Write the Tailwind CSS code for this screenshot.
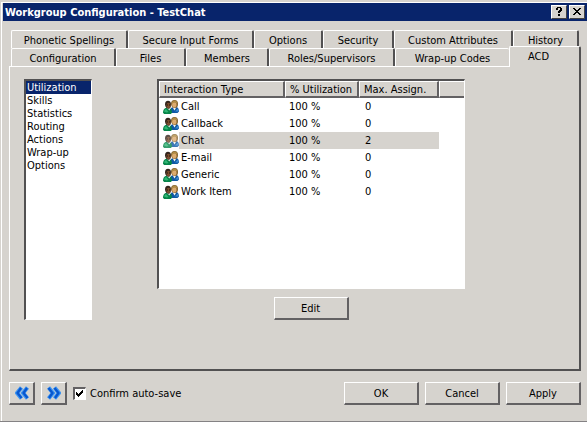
<!DOCTYPE html>
<html lang="en">
<head>
<meta charset="utf-8">
<meta name="viewport" content="width=device-width, initial-scale=1">
<title>Workgroup Configuration - TestChat</title>
<script src="https://cdn.jsdelivr.net/npm/@tailwindcss/browser@4"></script>
</head>
<body class="bg-[#d6d3ce] font-['DejaVu_Sans_Condensed','DejaVu_Sans',sans-serif] text-[11px] leading-[13px] text-black">
<svg class="hidden" aria-hidden="true">
  <symbol id="people" viewBox="0 0 16 14">
    <path d="M8 8 10 7H14Q16 8 16 11.500L14.500 13H8Z" fill="#0f58a3"/>
    <path d="M9.500 7h4l-2 3.500z" fill="#f4f4ee"/>
    <path d="M12 11.500 15 8.500 15.500 11.500z" fill="#3a8ad2"/>
    <path d="M8 4Q8 0 11.500 0 15 0 15 4 15 8 11.800 8 8.500 8 8 4Z" fill="#80602c"/>
    <ellipse cx="11.300" cy="4.700" rx="2.200" ry="2.800" fill="#dcab6e"/>
    <path d="M8.500 3Q9.500 .5 11.500 .5 14 .5 14.300 3.500L12.500 2.500 9 3.200Z" fill="#b08c46"/>
    <path d="M0 12.500Q0 9 2.500 8H7Q9 9 9 12.500L8 14H1Z" fill="#07854a"/>
    <path d="M1 11.500Q1.500 9.500 3 9L5.500 12 3.500 12.500Z" fill="#2fb673"/>
    <path d="M4 8h3.500L6.500 10.500Z" fill="#e8eee8"/>
    <path d="M2 4.500Q2 .8 5 .8 8 .8 8 4.500 8 8.700 5.300 8.700 2.500 8.500 2 4.500Z" fill="#33241c"/>
    <ellipse cx="5.500" cy="5.500" rx="2" ry="2.800" fill="#7d4c2c"/>
    <path d="M4 4.500h1v1H4zM6 4.500h1v1H6z" fill="#20120c"/>
  </symbol>
  <symbol id="chevrons" viewBox="0 0 14 14">
    <path d="M1.500 1.500 6 7 1.500 12.500M7.500 1.500 12 7 7.500 12.500" fill="none" stroke="#3c94f2" stroke-width="4"/>
    <path d="M1.500 2 5.500 7 2 12M7.500 2 11.500 7 8 12" fill="none" stroke="#0857cf" stroke-width="2.200"/>
  </symbol>
</svg>

<main class="flex min-h-screen flex-col border-b border-[#848284] pt-0.5 pl-px">
  <div class="flex flex-1 flex-col border-t border-l border-white pl-px">
    <header class="flex h-[18px] items-center bg-[#08246b] pr-0.5 pl-0.5 text-white">
      <h1 class="flex-1 font-bold">Workgroup Configuration - TestChat</h1>
      <div class="flex gap-0.5">
        <button type="button" aria-label="Help" class="flex h-3.5 w-4 items-center justify-center border border-t-white border-r-[#424142] border-b-[#424142] border-l-white bg-[#d6d3ce]">
          <svg class="h-[10px] w-[10px]" viewBox="0 0 10 10" shape-rendering="crispEdges"><path d="M3 0h4v1h1v3H7v1H6v1H4V4h1V3h1V1H4v2H2V1h1zM4 7h2v2H4z" fill="#000"/></svg>
        </button>
        <button type="button" aria-label="Close" class="flex h-3.5 w-4 items-center justify-center border border-t-white border-r-[#424142] border-b-[#424142] border-l-white bg-[#d6d3ce]">
          <svg class="h-[10px] w-[10px]" viewBox="0 0 10 10" shape-rendering="crispEdges"><path d="M1 1h2v1h1v1h2V2h1V1h2v1H8v1H7v1H6v1h1v1h1v1h1v1H7V7H6V6H4v1H3v1H1V7h1V6h1V5h1V4H3V3H2V2H1z" fill="#000"/></svg>
        </button>
      </div>
    </header>

    <div class="flex flex-1 flex-col pt-[9px] pr-1.5 pb-4 pl-1.5">
      <div role="tablist" aria-label="Workgroup settings">
        <div class="mr-0.5 ml-0.5 grid grid-cols-[117fr_126fr_69fr_71fr_119fr_66fr] grid-rows-[18px]">
          <button role="tab" type="button" class="rounded-t-[2px] border-t border-r-2 border-l border-t-white border-r-[#525152] border-l-white pt-0.5">Phonetic Spellings</button>
          <button role="tab" type="button" class="rounded-t-[2px] border-t border-r-2 border-l border-t-white border-r-[#525152] border-l-white pt-0.5">Secure Input Forms</button>
          <button role="tab" type="button" class="rounded-t-[2px] border-t border-r-2 border-l border-t-white border-r-[#525152] border-l-white pt-0.5">Options</button>
          <button role="tab" type="button" class="rounded-t-[2px] border-t border-r-2 border-l border-t-white border-r-[#525152] border-l-white pt-0.5">Security</button>
          <button role="tab" type="button" class="rounded-t-[2px] border-t border-r-2 border-l border-t-white border-r-[#525152] border-l-white pt-0.5">Custom Attributes</button>
          <button role="tab" type="button" class="rounded-t-[2px] border-t border-r-2 border-l border-t-white border-r-[#525152] border-l-white pt-0.5">History</button>
        </div>
        <div class="ml-0.5 grid grid-cols-[105fr_70fr_83fr_126fr_114fr_72fr] grid-rows-[18px] items-end">
          <button role="tab" type="button" class="h-[18px] rounded-t-[2px] border-t border-r-2 border-l border-t-white border-r-[#525152] border-l-white pt-0.5">Configuration</button>
          <button role="tab" type="button" class="h-[18px] rounded-t-[2px] border-t border-r-2 border-l border-t-white border-r-[#525152] border-l-white pt-0.5">Files</button>
          <button role="tab" type="button" class="h-[18px] rounded-t-[2px] border-t border-r-2 border-l border-t-white border-r-[#525152] border-l-white pt-0.5">Members</button>
          <button role="tab" type="button" class="h-[18px] rounded-t-[2px] border-t border-r-2 border-l border-t-white border-r-[#525152] border-l-white pt-0.5">Roles/Supervisors</button>
          <button role="tab" type="button" class="h-[18px] rounded-t-[2px] border-t border-l border-white pt-0.5">Wrap-up Codes</button>
          <button role="tab" type="button" aria-selected="true" class="relative z-10 -mb-px h-[21px] rounded-t-[2px] border-t border-r-2 border-l border-t-white border-r-[#525152] border-l-white bg-[#d6d3ce] pr-3 pb-0.5">ACD</button>
        </div>
      </div>

      <section role="tabpanel" aria-label="ACD" class="flex flex-1 items-start border-t border-r-2 border-b-2 border-l border-t-white border-r-[#525152] border-b-[#525152] border-l-white pt-3 pl-3.5">
        <select size="7" aria-label="ACD pages" class="h-[241px] w-[68px] shrink-0 overflow-hidden rounded-none border-t-2 border-r border-b border-l-2 border-t-[#525152] border-r-white border-b-white border-l-[#525152] bg-white p-0 outline-none">
          <option selected class="min-h-0 p-0 pl-px leading-[13px] checked:bg-[#08246b] checked:bg-linear-to-r checked:from-[#08246b] checked:to-[#08246b] checked:text-white">Utilization</option>
          <option class="min-h-0 p-0 pl-px leading-[13px]">Skills</option>
          <option class="min-h-0 p-0 pl-px leading-[13px]">Statistics</option>
          <option class="min-h-0 p-0 pl-px leading-[13px]">Routing</option>
          <option class="min-h-0 p-0 pl-px leading-[13px]">Actions</option>
          <option class="min-h-0 p-0 pl-px leading-[13px]">Wrap-up</option>
          <option class="min-h-0 p-0 pl-px leading-[13px]">Options</option>
        </select>

        <div class="ml-[65px] flex w-[308px] flex-col items-center gap-2">
          <div class="h-[210px] w-full border-t-2 border-r border-b border-l-2 border-t-[#525152] border-r-white border-b-white border-l-[#525152] bg-white">
            <table class="w-full table-fixed border-separate border-spacing-0 text-left">
              <colgroup><col class="w-[126px]"><col class="w-[74px]"><col class="w-[80px]"><col></colgroup>
              <thead>
                <tr class="h-[17px] bg-[#d6d3ce]">
                  <th class="border-t border-r-2 border-b-2 border-l border-t-white border-r-[#636163] border-b-[#636163] border-l-white p-0 pl-1 font-normal">Interaction Type</th>
                  <th class="border-t border-r-2 border-b-2 border-l border-t-white border-r-[#636163] border-b-[#636163] border-l-white p-0 pl-1 font-normal">% Utilization</th>
                  <th class="border-t border-r-2 border-b-2 border-l border-t-white border-r-[#636163] border-b-[#636163] border-l-white p-0 pl-1 font-normal">Max. Assign.</th>
                  <td class="border-t border-b-2 border-l border-t-white border-b-[#636163] border-l-white p-0"></td>
                </tr>
              </thead>
              <tbody>
                <tr class="h-[17px]"><td class="p-0 pl-1"><div class="flex h-[17px] items-center"><svg class="h-3.5 w-4"><use href="#people"/></svg><span class="flex-1 pl-0.5">Call</span></div></td><td class="p-0 pl-1">100 %</td><td class="p-0 pl-1.5">0</td><td class="p-0"></td></tr>
                <tr class="h-[17px]"><td class="p-0 pl-1"><div class="flex h-[17px] items-center"><svg class="h-3.5 w-4"><use href="#people"/></svg><span class="flex-1 pl-0.5">Callback</span></div></td><td class="p-0 pl-1">100 %</td><td class="p-0 pl-1.5">0</td><td class="p-0"></td></tr>
                <tr class="h-[17px]" aria-selected="true"><td class="p-0 pl-1"><div class="flex h-[17px] items-center"><svg class="h-3.5 w-4 opacity-80"><use href="#people"/></svg><span class="flex h-[17px] flex-1 items-center bg-[#d6d3ce] pl-0.5">Chat</span></div></td><td class="bg-[#d6d3ce] p-0 pl-1">100 %</td><td class="bg-[#d6d3ce] p-0 pl-1.5">2</td><td class="p-0"></td></tr>
                <tr class="h-[17px]"><td class="p-0 pl-1"><div class="flex h-[17px] items-center"><svg class="h-3.5 w-4"><use href="#people"/></svg><span class="flex-1 pl-0.5">E-mail</span></div></td><td class="p-0 pl-1">100 %</td><td class="p-0 pl-1.5">0</td><td class="p-0"></td></tr>
                <tr class="h-[17px]"><td class="p-0 pl-1"><div class="flex h-[17px] items-center"><svg class="h-3.5 w-4"><use href="#people"/></svg><span class="flex-1 pl-0.5">Generic</span></div></td><td class="p-0 pl-1">100 %</td><td class="p-0 pl-1.5">0</td><td class="p-0"></td></tr>
                <tr class="h-[17px]"><td class="p-0 pl-1"><div class="flex h-[17px] items-center"><svg class="h-3.5 w-4"><use href="#people"/></svg><span class="flex-1 pl-0.5">Work Item</span></div></td><td class="p-0 pl-1">100 %</td><td class="p-0 pl-1.5">0</td><td class="p-0"></td></tr>
              </tbody>
            </table>
          </div>
          <button type="button" class="h-[23px] w-[75px] border-t border-r-2 border-b-2 border-l border-t-white border-r-[#636163] border-b-[#636163] border-l-white">Edit</button>
        </div>
      </section>

      <footer class="flex items-center gap-1.5 pt-[11px]">
        <button type="button" aria-label="Previous" class="flex h-[23px] w-[26px] items-center justify-center border-t border-r-2 border-b-2 border-l border-t-white border-r-[#636163] border-b-[#636163] border-l-white"><svg class="h-3.5 w-3.5 rotate-180"><use href="#chevrons"/></svg></button>
        <button type="button" aria-label="Next" class="flex h-[23px] w-[26px] items-center justify-center border-t border-r-2 border-b-2 border-l border-t-white border-r-[#636163] border-b-[#636163] border-l-white"><svg class="h-3.5 w-3.5"><use href="#chevrons"/></svg></button>
        <label class="flex flex-1 items-center gap-1">
          <span class="grid">
            <input type="checkbox" checked class="peer col-start-1 row-start-1 h-[13px] w-[13px] appearance-none border-t-2 border-r border-b border-l-2 border-t-[#636163] border-r-white border-b-white border-l-[#636163] bg-white">
            <svg class="pointer-events-none col-start-1 row-start-1 hidden h-[13px] w-[13px] peer-checked:block" viewBox="0 0 13 13" shape-rendering="crispEdges"><path d="M3 5h1v1h1v1h1V6h1V5h1V4h1V3h1v3H9v1H8v1H7v1H6v1H5V9H4V8H3z" fill="#000"/></svg>
          </span>
          Confirm auto-save
        </label>
        <button type="button" class="h-[23px] w-[75px] border-t border-r-2 border-b-2 border-l border-t-white border-r-[#636163] border-b-[#636163] border-l-white">OK</button>
        <button type="button" class="h-[23px] w-[75px] border-t border-r-2 border-b-2 border-l border-t-white border-r-[#636163] border-b-[#636163] border-l-white">Cancel</button>
        <button type="button" class="h-[23px] w-[75px] border-t border-r-2 border-b-2 border-l border-t-white border-r-[#636163] border-b-[#636163] border-l-white">Apply</button>
      </footer>
    </div>
  </div>
</main>
</body>
</html>
